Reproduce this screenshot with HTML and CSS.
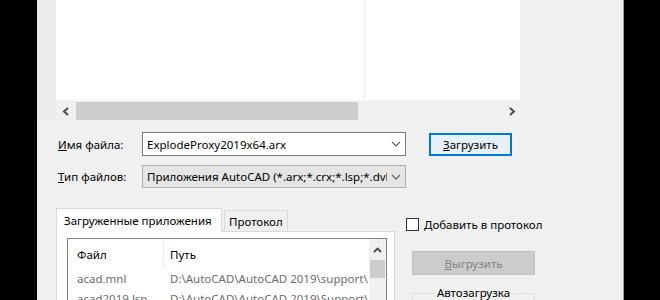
FILE: index.html
```html
<!DOCTYPE html>
<html lang="ru">
<head>
    <meta charset="UTF-8">
    <title>Загрузка/выгрузка приложений</title>
    <link rel="stylesheet" href="styles.css">
</head>
<body>
    <div class="dialog">
        <div class="browser">
            <div class="places"></div>
            <div class="files">
                <div class="file-list">
                    <div class="col-name"></div>
                    <div class="col-rest"></div>
                </div>
                <div class="hscroll">
                    <div class="arrow">
                        <svg width="8" height="9" viewBox="0 0 8 9"><polyline points="6,1 2,4.5 6,8" fill="none" stroke="#4a4a4a" stroke-width="2"/></svg>
                    </div>
                    <div class="thumb"></div>
                    <div class="track"></div>
                    <div class="arrow right">
                        <svg width="8" height="9" viewBox="0 0 8 9"><polyline points="2,1 6,4.5 2,8" fill="none" stroke="#4a4a4a" stroke-width="2"/></svg>
                    </div>
                </div>
            </div>
        </div>

        <div class="fields">
            <div class="row">
                <label class="lbl"><u>И</u>мя файла:</label>
                <div class="combo">
                    <span>ExplodeProxy2019x64.arx</span>
                    <svg width="10" height="6" viewBox="0 0 10 6"><polyline points="1,1 5,5 9,1" fill="none" stroke="#606060" stroke-width="1.2"/></svg>
                </div>
                <button class="btn default" type="button"><u>З</u>агрузить</button>
            </div>
            <div class="row second">
                <label class="lbl"><u>Т</u>ип файлов:</label>
                <div class="combo gray">
                    <span>Приложения AutoCAD (*.arx;*.crx;*.lsp;*.dvb</span>
                    <svg width="10" height="6" viewBox="0 0 10 6"><polyline points="1,1 5,5 9,1" fill="none" stroke="#606060" stroke-width="1.2"/></svg>
                </div>
            </div>
        </div>

        <div class="lower">
            <div class="tabs-wrap">
                <div class="tab-strip">
                    <div class="tab active">Загруженные приложения</div>
                    <div class="tab">Протокол</div>
                </div>
                <div class="tab-panel">
                    <div class="list">
                        <div class="list-body">
                            <div class="list-head">
                                <div class="c1">Файл</div>
                                <div class="c2">Путь</div>
                            </div>
                            <div class="list-row">
                                <div class="c1">acad.mnl</div>
                                <div class="c2">D:\AutoCAD\AutoCAD 2019\support\</div>
                            </div>
                            <div class="list-row">
                                <div class="c1">acad2019.lsp</div>
                                <div class="c2">D:\AutoCAD\AutoCAD 2019\Support\</div>
                            </div>
                        </div>
                        <div class="vscroll">
                            <div class="up">
                                <svg width="9" height="6" viewBox="0 0 9 6"><polyline points="1,5 4.5,1.5 8,5" fill="none" stroke="#4a4a4a" stroke-width="1.8"/></svg>
                            </div>
                            <div class="vthumb"></div>
                        </div>
                    </div>
                </div>
            </div>

            <div class="side">
                <label class="check">
                    <span class="box"></span>
                    <span><u>Д</u>обавить в протокол</span>
                </label>
                <button class="btn wide" type="button" disabled><u>В</u>ыгрузить</button>
                <div class="group">
                    <span class="legend">Автозагрузка</span>
                </div>
            </div>
        </div>
    </div>
</body>
</html>
```

FILE: styles.css
```css
body {
    margin: 0;
    background-color: #000;
    font-family: "Noto Sans", "Liberation Sans", sans-serif;
    font-size: 11.5px;
    color: #000;
}

.dialog {
    margin-left: 37px;
    width: 586px;
    height: 300px;
    background-color: #f0f0f0;
    border-right: 1px solid #9a9a9a;
    overflow: hidden;
}

/* file browser area at the top */
.browser {
    display: flex;
    height: 120px;
}

.places {
    width: 19px;
    background-color: #e9ecea;
}

.files {
    width: 464px;
    display: flex;
    flex-direction: column;
}

.file-list {
    display: flex;
    height: 100px;
    background-color: #fff;
    border-bottom: 1px solid #f6f6f6;
}

.col-name {
    width: 308px;
    border-right: 1px solid #efefef;
}

.col-rest {
    flex: 1;
}

.hscroll {
    display: flex;
    height: 18px;
    margin-top: 1px;
    background-color: #f0f0f0;
}

.arrow {
    width: 20px;
    display: flex;
    align-items: center;
    justify-content: center;
}

.arrow.right {
    width: 16px;
}

.thumb {
    width: 282px;
    background-color: #cdcdcd;
}

.track {
    flex: 1;
}

/* name / type rows */
.fields {
    padding-left: 21px;
    padding-top: 12px;
}

.row {
    display: flex;
    align-items: center;
    height: 24px;
}

.row.second {
    margin-top: 9px;
    height: 23px;
}

.lbl {
    width: 84px;
}

.combo {
    box-sizing: border-box;
    width: 264px;
    height: 100%;
    display: flex;
    align-items: center;
    justify-content: space-between;
    padding: 0 4px 0 4px;
    background-color: #fff;
    border: 1px solid #7a7a7a;
    overflow: hidden;
}

.combo span {
    white-space: nowrap;
    overflow: hidden;
    flex: 1;
}

.combo svg {
    flex-shrink: 0;
    margin-left: 4px;
}

.combo.gray {
    background-color: #e5e5e5;
    border-color: #adadad;
}

.btn {
    box-sizing: border-box;
    font-family: inherit;
    font-size: inherit;
    color: #000;
    background-color: #e1e1e1;
    border: 1px solid #adadad;
    padding: 0;
}

.btn.default {
    width: 83px;
    height: 23px;
    margin-left: 23px;
    background-color: #e5f1fb;
    border: 2px solid #0078d7;
}

.btn.wide {
    width: 123px;
    height: 24px;
    margin-left: 6px;
    margin-top: 19px;
    background-color: #cccccc;
    border-color: #bfbfbf;
    color: #838383;
}

/* tabs */
.lower {
    display: flex;
    margin-top: 19px;
}

.tabs-wrap {
    margin-left: 19px;
    width: 339px;
}

.tab-strip {
    display: flex;
    align-items: flex-end;
    height: 24px;
}

.tab {
    box-sizing: border-box;
    height: 21px;
    padding: 0 4px;
    display: flex;
    align-items: center;
    background-color: #f0f0f0;
    border: 1px solid #d9d9d9;
    border-bottom: none;
    margin-left: 2px;
}

.tab.active {
    height: 24px;
    width: 166px;
    margin-left: 0;
    padding-left: 7px;
    background-color: #fff;
    position: relative;
    top: 1px;
}

.tab-panel {
    height: 80px;
    background-color: #fff;
    border: 1px solid #d9d9d9;
    padding: 6px 0 0 10px;
}

.list {
    box-sizing: border-box;
    display: flex;
    width: 320px;
    height: 100px;
    border: 1px solid #828282;
    background-color: #fff;
}

.list-body {
    flex: 1;
    min-width: 0;
    padding-top: 1px;
}

.list-head,
.list-row {
    display: flex;
    align-items: center;
}

.list-head {
    height: 28px;
}

.list-row {
    height: 20px;
    color: #6d6d6d;
    white-space: nowrap;
}

.c1 {
    box-sizing: border-box;
    width: 96px;
    padding-left: 9px;
    padding-right: 12px;
    overflow: hidden;
    text-overflow: ellipsis;
}

.list-head .c1 {
    border-right: 1px solid #ececec;
    height: 100%;
    display: flex;
    align-items: center;
}

.c2 {
    flex: 1;
    min-width: 0;
    padding-left: 6px;
    overflow: hidden;
    text-overflow: ellipsis;
}

.vscroll {
    width: 17px;
    background-color: #f0f0f0;
    display: flex;
    flex-direction: column;
}

.up {
    height: 21px;
    display: flex;
    align-items: center;
    justify-content: center;
}

.vthumb {
    height: 18px;
    margin: 0 1px;
    background-color: #cdcdcd;
}

/* right side controls */
.side {
    margin-left: 11px;
    padding-top: 10px;
}

.check {
    display: flex;
    align-items: center;
}

.box {
    box-sizing: border-box;
    width: 13px;
    height: 13px;
    border: 1px solid #333;
    background-color: #fff;
    margin-right: 5px;
}

.group {
    box-sizing: border-box;
    width: 123px;
    height: 20px;
    margin-left: 6px;
    margin-top: 18px;
    border: 1px solid #dcdcdc;
    text-align: center;
}

.legend {
    position: relative;
    top: -9px;
    padding: 0 3px;
    background-color: #f0f0f0;
}
```
